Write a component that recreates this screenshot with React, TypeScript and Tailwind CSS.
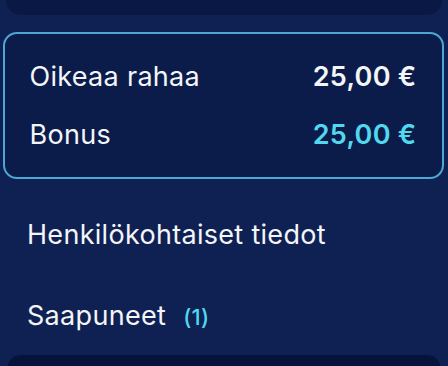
export default function App() {
  return (
    <div
      className="w-[448px] h-[366px] overflow-hidden bg-[#0f2152] flex flex-col"
      style={{ fontFamily: "Inter, 'Noto Sans', sans-serif" }}
    >
      <div className="mx-[6px] h-[15px] shrink-0 rounded-b-[16px] bg-[#091944]" />
      <div className="mt-[17px] ml-[3px] mr-[4px] shrink-0 rounded-[14px] border-2 border-[#4ca8d3] bg-[#0b1c4a] pl-[24.5px] pr-[25.5px] pt-[27px] pb-[26px] flex flex-col gap-[26px]">
        <div className="flex items-center justify-between h-[32px] text-[27px] tracking-[0.3px] leading-[32px] text-[#f3f5f9]">
          <span>Oikeaa rahaa</span>
          <span className="font-semibold">25,00 €</span>
        </div>
        <div className="flex items-center justify-between h-[32px] text-[27px] tracking-[0.3px] leading-[32px]">
          <span className="text-[#f3f5f9]">Bonus</span>
          <span className="font-semibold text-[#52d8ee]">25,00 €</span>
        </div>
      </div>
      <div className="mt-[40px] pl-[27px] flex flex-col gap-[49px] text-[27px] tracking-[0.3px] leading-[32px] text-[#f3f5f9]">
        <div className="h-[32px]">Henkilökohtaiset tiedot</div>
        <div className="h-[32px] flex items-baseline">
          <span>Saapuneet</span>
          <span className="ml-[17px] text-[22px] font-medium text-[#52d8ee]">(1)</span>
        </div>
      </div>
      <div className="mt-[23px] mx-[7px] h-[40px] shrink-0 rounded-t-[14px] bg-[#06133a]" />
    </div>
  );
}
